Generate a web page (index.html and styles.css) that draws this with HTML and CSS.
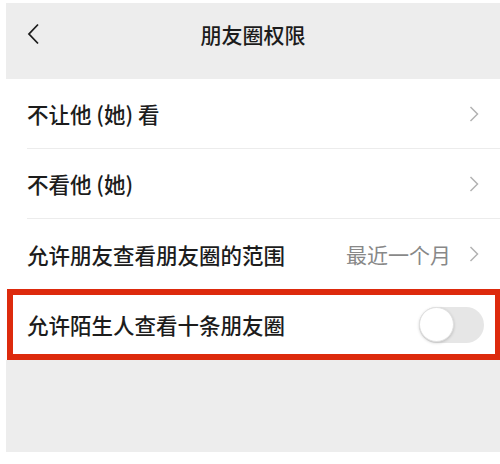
FILE: index.html
```html
<!DOCTYPE html>
<html lang="zh-CN">
<head>
    <meta charset="UTF-8">
    <meta name="viewport" content="width=device-width, initial-scale=1.0">
    <title>朋友圈权限</title>
    <link rel="stylesheet" href="styles.css">
</head>
<body>
    <div class="screen">
        <div class="topbar">
            <span class="back">
                <svg width="14" height="22" viewBox="0 0 14 22">
                    <path d="M12 1.5 L3 11 L12 20.5" fill="none" stroke="#1c1c1c" stroke-width="1.8"/>
                </svg>
            </span>
            <h1 class="title">朋友圈权限</h1>
            <span class="side"></span>
        </div>

        <div class="list">
            <div class="row">
                <div class="row-body line">
                    <span class="label">不让他 (她) 看</span>
                    <span class="arrow">
                        <svg width="10" height="16" viewBox="0 0 10 16">
                            <path d="M1.5 1 L8.5 8 L1.5 15" fill="none" stroke="#b3b3b3" stroke-width="1.5"/>
                        </svg>
                    </span>
                </div>
            </div>
            <div class="row">
                <div class="row-body line">
                    <span class="label">不看他 (她)</span>
                    <span class="arrow">
                        <svg width="10" height="16" viewBox="0 0 10 16">
                            <path d="M1.5 1 L8.5 8 L1.5 15" fill="none" stroke="#b3b3b3" stroke-width="1.5"/>
                        </svg>
                    </span>
                </div>
            </div>
            <div class="row">
                <div class="row-body">
                    <span class="label">允许朋友查看朋友圈的范围</span>
                    <span class="value">最近一个月</span>
                    <span class="arrow">
                        <svg width="10" height="16" viewBox="0 0 10 16">
                            <path d="M1.5 1 L8.5 8 L1.5 15" fill="none" stroke="#b3b3b3" stroke-width="1.5"/>
                        </svg>
                    </span>
                </div>
            </div>
            <div class="row-marked">
                <span class="label">允许陌生人查看十条朋友圈</span>
                <span class="switch"><span class="knob"></span></span>
            </div>
        </div>

        <div class="rest"></div>
    </div>
</body>
</html>
```

FILE: styles.css
```css
body {
    margin: 0;
    background-color: white;
    font-family: "Noto Sans CJK SC", "Liberation Sans", sans-serif;
    color: #1c1c1c;
}
.screen {
    margin: 3px 0 12px 6px;
    background-color: #ededed;
}
.topbar {
    display: flex;
    align-items: center;
    height: 40px;
    padding: 11px 0 25px;
}
.back {
    width: 60px;
    padding-left: 20px;
    display: flex;
    align-items: center;
}
.side {
    width: 80px;
}
.title {
    flex: 1;
    margin: 0;
    text-align: center;
    font-size: 21px;
    font-weight: 500;
}
.list {
    background-color: white;
}
.row {
    padding-left: 21px;
}
.row-body {
    display: flex;
    align-items: center;
    height: 70px;
    padding-right: 21px;
}
.line {
    border-bottom: 1px solid #ececec;
    height: 69px;
}
.label {
    flex: 1;
    font-size: 21.5px;
    font-weight: 500;
}
.value {
    font-size: 21px;
    color: #888;
    margin-right: 18px;
}
.arrow {
    display: flex;
    align-items: center;
}
.row-marked {
    display: flex;
    align-items: center;
    height: 59px;
    margin-left: 1px;
    border: 6px solid #dd2a0d;
    border-right-width: 5px;
    padding: 0 11px 0 14px;
}
.switch {
    display: flex;
    width: 65px;
    height: 36px;
    border-radius: 18px;
    background-color: #e6e6e6;
}
.knob {
    width: 35px;
    height: 35px;
    border-radius: 50%;
    background-color: white;
    border: 1px solid #e0e0e0;
    box-sizing: border-box;
    box-shadow: 0 1px 3px rgba(0, 0, 0, 0.18);
}
.rest {
    height: 92px;
}
```
